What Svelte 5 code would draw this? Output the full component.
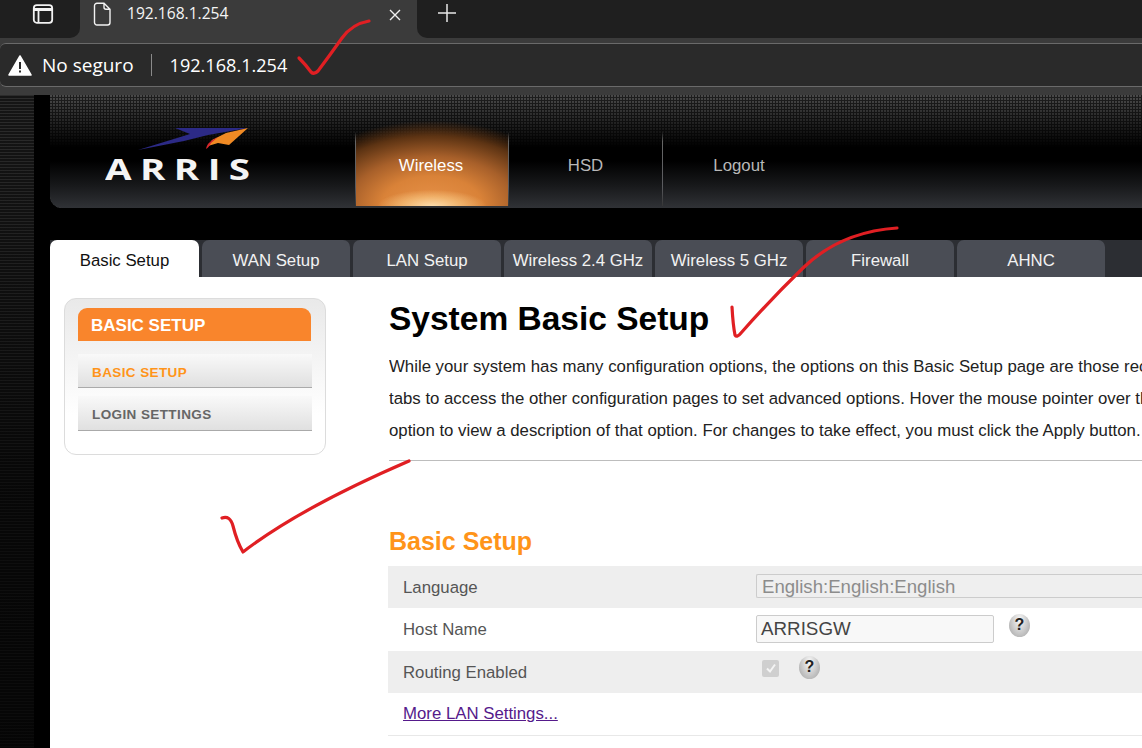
<script>
  const tabs = ['Basic Setup', 'WAN Setup', 'LAN Setup', 'Wireless 2.4 GHz', 'Wireless 5 GHz', 'Firewall', 'AHNC'];
  const nav = ['Wireless', 'HSD', 'Logout'];
  const lines = [
    'While your system has many configuration options, the options on this Basic Setup page are those rec',
    'tabs to access the other configuration pages to set advanced options. Hover the mouse pointer over th',
    'option to view a description of that option. For changes to take effect, you must click the Apply button.'
  ];
</script>

<div class="shell">
  <header class="browser">
    <div class="strip">
      <div class="winbtn">
        <svg width="22" height="20" viewBox="0 0 22 20" fill="none" stroke="#f2f2f2" stroke-width="1.8"><rect x="1.800" y="1.200" width="18.400" height="17.600" rx="3"/><path d="M2 5.500h18" stroke-width="3"/><path d="M6.500 6v12.600"/></svg>
      </div>
      <div class="btab">
        <svg class="file" width="18" height="24" viewBox="0 0 18 24" fill="none" stroke="#f2f2f2" stroke-width="1.4"><path d="M4 1.200h7l6 6v13.300a2.500 2.500 0 0 1-2.500 2.500h-10.500A2.500 2.500 0 0 1 1.500 20.500V3.700A2.500 2.500 0 0 1 4 1.200zM11 1.200v4a2 2 0 0 0 2 2h4"/></svg>
        <span class="btitle">192.168.1.254</span>
        <svg class="close" width="12" height="12" viewBox="0 0 12 12" stroke="#f0f0f0" stroke-width="1.4"><path d="M1 1l10 10M11 1L1 11"/></svg>
      </div>
      <div class="rest">
        <svg class="plus" width="20" height="20" viewBox="0 0 20 20" stroke="#e8e8e8" stroke-width="1.5"><path d="M10 1v18M1 10h18"/></svg>
      </div>
    </div>
    <div class="toolbar">
      <div class="omni">
        <svg class="warn" width="24" height="21" viewBox="0 0 24 21"><path d="M12 1 L23 20 H1 Z" fill="#fff" stroke="#fff" stroke-width="1.500" stroke-linejoin="round"/><path d="M11 7h2v7h-2zM11 15.500h2v2h-2z" fill="#2a2a2a"/></svg>
        <span class="nosec">No seguro</span>
        <span class="sep"></span>
        <span class="url">192.168.1.254</span>
      </div>
    </div>
  </header>

  <div class="page">
    <div class="rail"></div>
    <main class="main">
      <section class="hero">
        <div class="logo">
          <svg class="swoosh" width="120" height="26" viewBox="0 0 120 26">
            <path d="M37 0 H110 L70 7 L46 13 L0 22 L52 6Z" fill="#2c2a86"/>
            <path d="M110 0 L88 5 L74 12 L70 18 L80 15 L91 17Z" fill="#f08a24"/>
            <path d="M68 21 C69 15 74 12 80 9 L73 15 C72 17 70 20 68 21Z" fill="#d8262c"/>
          </svg>
          <span class="wordmark">ARRIS</span>
        </div>
        <nav class="nav">
          {#each nav as n, i}
            <a class="navitem" class:on={i === 0}>{n}</a>
          {/each}
        </nav>
      </section>

      <div class="tabs">
        {#each tabs as t, i}
          <div class="tab" class:active={i === 0}>{t}</div>
        {/each}
      </div>

      <div class="content">
        <aside class="side">
          <div class="sidehead">BASIC SETUP</div>
          <div class="sideitem cur">BASIC SETUP</div>
          <div class="sideitem">LOGIN SETTINGS</div>
        </aside>
        <div class="body">
          <h1>System Basic Setup</h1>
          {#each lines as l}
            <p>{l}</p>
          {/each}
          <hr />
          <h2>Basic Setup</h2>
          <div class="row alt">
            <span class="label">Language</span>
            <div class="select">English:English:English</div>
          </div>
          <div class="row">
            <span class="label">Host Name</span>
            <div class="input">ARRISGW</div>
            <span class="help">?</span>
          </div>
          <div class="row alt">
            <span class="label">Routing Enabled</span>
            <span class="check"><svg width="14" height="14" viewBox="0 0 14 14" fill="none" stroke="#f4f4f4" stroke-width="2"><path d="M3 7.500l3 3 5-7"/></svg></span>
            <span class="help h2q">?</span>
          </div>
          <div class="row last">
            <a class="more">More LAN Settings...</a>
          </div>
        </div>
      </div>
    </main>
  </div>

  <svg class="ink" width="1142" height="748" viewBox="0 0 1142 748" fill="none" stroke="#e01f23" stroke-width="3.200" stroke-linecap="round" stroke-linejoin="round">
    <path d="M299 58 Q306 65 311 72 Q314 75 318 71 Q330 55 342 38 Q352 24 369 21"/>
    <path d="M732 307 Q733 325 735 335 Q737 338 741 333 Q770 300 803 268 Q840 232 897 228"/>
    <path d="M222 518 Q230 515 233 526 Q237 542 243 552 Q300 508 409 461"/>
  </svg>
</div>

<style>
  :global(body) { margin: 0; background: #000; overflow: hidden; }
  .shell { position: relative; width: 1142px; height: 748px; overflow: hidden; display: flex; flex-direction: column; font-family: "Liberation Sans", Arial, sans-serif; background: #000; }

  .browser { height: 95px; flex: none; background: #3b3b3b; font-family: "Open Sans", "Liberation Sans", sans-serif; color: #fff; }
  .strip { height: 38px; display: flex; align-items: stretch; }
  .winbtn { width: 80px; background: #1f1f1f; border-bottom-right-radius: 10px; box-sizing: border-box; padding: 4px 0 0 32px; }
  .btab { width: 337px; display: flex; align-items: flex-start; box-sizing: border-box; padding: 2px 16px 0 13px; }
  .file { flex: none; }
  .btitle { margin-left: 16px; font-size: 15.600px; line-height: 23px; flex: 1; color: #f4f4f4; }
  .close { margin-top: 7px; }
  .rest { flex: 1; background: #1f1f1f; border-bottom-left-radius: 10px; padding: 3px 0 0 20px; }
  .toolbar { height: 57px; box-sizing: border-box; padding: 5px 0 0; }
  .omni { height: 44px; box-sizing: border-box; background: #2a2a2a; border: solid #6a6a6a; border-width: 1px 0; display: flex; align-items: center; padding-left: 8px; border-radius: 6px 0 0 6px; }
  .warn { flex: none; }
  .nosec { margin-left: 10px; font-size: 19px; }
  .sep { width: 1px; height: 22px; background: #8a8a8a; margin: 0 18px 0 17px; }
  .url { font-size: 18.100px; }

  .page { display: flex; flex: 1; min-height: 0; }
  .rail { width: 34px; flex: none; background: linear-gradient(rgba(0,0,0,0), rgba(0,0,0,.65) 60%, rgba(0,0,0,.75)), repeating-linear-gradient(#2c2c2c 0 1px, #151515 1px 3px); }
  .main { margin-left: 16px; flex: 1; min-width: 0; display: flex; flex-direction: column; background: #000; }

  .hero { height: 113px; flex: none; display: flex; border-bottom-left-radius: 12px; background:
    radial-gradient(circle at 1px 1px, #4a4a4a 0.8px, transparent 1.100px) 0 0 / 3px 3px,
    #1e1e1e; position: relative; overflow: hidden; }
  .hero::before { content: ""; position: absolute; inset: 0; background: linear-gradient(rgba(0,0,0,0) 0, rgba(0,0,0,.35) 18px, #000 52px, #000 66px, #17181a 90px, #303236 113px); }
  .logo { position: relative; width: 305px; flex: none; box-sizing: border-box; padding: 33px 0 0 55px; }
  .swoosh { display: block; margin-left: 33px; }
  .wordmark { display: inline-block; margin-top: 1px; font-family: "Open Sans", "Liberation Sans", sans-serif; font-weight: 700; font-size: 29px; line-height: 28px; letter-spacing: 6.300px; color: #f4f4f4; transform: scaleX(1.33); transform-origin: left center; }
  .nav { position: relative; display: flex; align-items: flex-end; padding-bottom: 2px; }
  .navitem { width: 154px; height: 90px; padding: 10px 2px 0 0; display: flex; align-items: center; justify-content: center; font-size: 16.800px; color: #b8b8b8; box-sizing: border-box; border-right: 1px solid; border-image: linear-gradient(transparent 16px, #666 26px, #5a5b5f 70px, #333 100%) 1; }
  .navitem:nth-child(2) { padding-right: 0; }
  .navitem:last-child { border: 0; }
  .navitem.on { color: #fff; background: radial-gradient(ellipse 36% 18% at 50% 100%, #fcdcaa 0, rgba(245,190,120,.75) 55%, rgba(232,148,68,0) 100%), radial-gradient(ellipse 95% 95% at 50% 100%, #e8934a 0, #d98238 35%, #a8602a 58%, #5c3313 82%, rgba(50,26,8,0) 100%); border-left: 1px solid; }

  .tabs { margin-top: 32px; height: 37px; flex: none; background: #2c2e33; display: flex; gap: 3px; }
  .tab { width: 148px; height: 37px; padding-top: 5px; box-sizing: border-box; background: #4a4d55; color: #f2f2f2; border-radius: 7px 7px 0 0; display: flex; align-items: center; justify-content: center; font-size: 16.800px; line-height: 1; flex: none; }
  .tab.active { width: 149px; background: #fff; color: #111; }

  .content { background: #fff; flex: 1; min-height: 0; display: flex; overflow: hidden; }
  .side { width: 234px; margin: 21px 0 0 14px; padding: 9px 13px 0; flex: none; height: 146px; border: 1px solid #dcdcdc; border-radius: 12px; background: linear-gradient(#e9e9e9, #ffffff 75%); }
  .sidehead { height: 33px; margin-right: 1px; background: #f9852c; border-radius: 9px 9px 0 0; color: #fff; font-weight: 700; font-size: 17px; line-height: 35px; padding-left: 13px; }
  .sideitem { margin-top: 13px; height: 34px; box-sizing: border-box; border-bottom: 1px solid #aaa; background: linear-gradient(#f9f9f9, #e0e0e0); color: #666; font-weight: 700; font-size: 13.500px; letter-spacing: .4px; line-height: 37px; padding-left: 14px; }
  .sideitem + .sideitem { margin-top: 8px; height: 35px; }
  .sideitem.cur { color: #ff9419; }

  .body { margin-left: 62px; flex: 1; min-width: 0; white-space: nowrap; }
  h1 { margin: 20px 0 0 1px; font-size: 33.500px; line-height: 44px; font-weight: 700; color: #000; }
  p { margin: 0 0 0 1px; font-size: 16.800px; line-height: 32px; color: #222; overflow: hidden; }
  h1 + p { margin-top: 10px; }
  hr { margin: 13px 0 0 1px; border: 0; border-top: 1px solid #bdbdbd; }
  h2 { margin: 63px 0 8px 1px; font-size: 25px; line-height: 34px; font-weight: 700; color: #ff9419; }
  .row { height: 42.250px; display: flex; align-items: center; padding-left: 15px; font-size: 16.800px; color: #555; }
  .row.alt { background: #eee; }
  .row.last { border-bottom: 1px solid #e8e8e8; }
  .label { width: 353px; flex: none; padding-top: 1px; }
  .alt .label { padding-top: 2px; }
  .select { flex: 1; height: 24px; box-sizing: border-box; border: 1px solid #ccc; border-right: 0; border-radius: 2px 0 0 2px; color: #8c8c8c; font-size: 18.600px; line-height: 24px; padding-left: 5px; background: #efefef; margin-top: -3px; }
  .input { width: 238px; height: 28px; box-sizing: border-box; border: 1px solid #ccc; border-radius: 2px; background: #f8f8f8; color: #444; font-size: 18.800px; line-height: 26px; padding-left: 4px; }
  .help { width: 21px; height: 23px; border-radius: 50%; margin: -8px 0 0 15px; background: radial-gradient(ellipse at 50% 25%, #f8f8f8, #a5a5a5 95%); color: #222; font-weight: 700; font-size: 16px; display: flex; align-items: center; justify-content: center; }
  .h2q { margin-left: 20px; margin-top: -9px; }
  .check { width: 17px; height: 17px; margin-top: -7px; margin-left: 6px; border-radius: 2px; background: #cfcfcf; display: flex; align-items: center; justify-content: center; }
  .more { color: #551a8b; text-decoration: underline; }

  .ink { position: absolute; left: 0; top: 0; pointer-events: none; }
</style>
